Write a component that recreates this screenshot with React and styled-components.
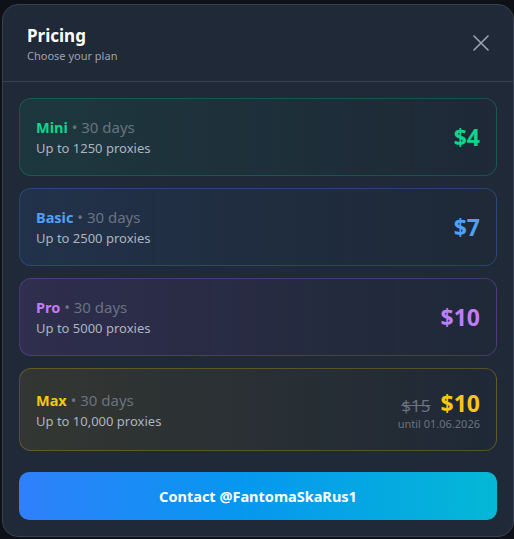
import React from 'react';
import styled, { createGlobalStyle } from 'styled-components';

const GlobalStyle = createGlobalStyle`
  html, body {
    margin: 0;
    padding: 0;
    background: #0e1118;
  }
  body {
    font-family: 'Segoe UI', 'Noto Sans', sans-serif;
  }
`;

const Modal = styled.div`
  box-sizing: border-box;
  margin: 4px 0 0 2px;
  width: 512px;
  height: 533px;
  background: #1f2937;
  border: 1px solid #374151;
  border-radius: 16px;
  display: flex;
  flex-direction: column;
  overflow: hidden;
`;

const Header = styled.div`
  display: flex;
  align-items: center;
  justify-content: space-between;
  height: 77px;
  box-sizing: border-box;
  padding: 0 24px;
  border-bottom: 1px solid #374151;
`;

const TitleBlock = styled.div`
  display: flex;
  flex-direction: column;
  gap: 2px;
  padding-top: 2px;
`;

const Title = styled.h2`
  margin: 0;
  font-size: 17px;
  font-weight: 700;
  color: #ffffff;
  line-height: 22px;
`;

const Subtitle = styled.p`
  margin: 0;
  font-size: 11px;
  color: #9ca3af;
  line-height: 14px;
`;

const CloseButton = styled.button`
  background: none;
  border: none;
  padding: 0;
  width: 18px;
  height: 18px;
  margin-right: -1px;
  color: #9ca3af;
  display: flex;
  align-items: center;
  justify-content: center;
  cursor: pointer;
`;

const Body = styled.div`
  display: flex;
  flex-direction: column;
  gap: 12px;
  padding: 16px 16px 0;
`;

const Card = styled.div`
  box-sizing: border-box;
  height: ${p => (p.$tall ? 83 : 78)}px;
  border-radius: 12px;
  border: 1px solid ${p => p.$border};
  background: linear-gradient(90deg, ${p => p.$tint} 0%, rgba(255, 255, 255, 0) 100%);
  display: flex;
  align-items: center;
  justify-content: space-between;
  padding: 0 16px 0 16px;
`;

const Info = styled.div`
  display: flex;
  flex-direction: column;
  gap: 2px;
`;

const NameLine = styled.div`
  font-size: 15px;
  line-height: 20px;
  color: #6b7280;
`;

const Name = styled.span`
  font-weight: 700;
  font-size: 14.5px;
  color: ${p => p.$color};
`;

const Desc = styled.div`
  font-size: 13px;
  line-height: 18px;
  color: #aeb4be;
`;

const PriceBlock = styled.div`
  display: flex;
  flex-direction: column;
  align-items: flex-end;
  gap: 0;
`;

const PriceRow = styled.div`
  display: flex;
  align-items: baseline;
  gap: 10px;
`;

const Price = styled.span`
  font-size: 23px;
  font-weight: 700;
  color: ${p => p.$color};
  line-height: 28px;
`;

const OldPrice = styled.span`
  font-size: 17px;
  color: #6b7280;
  text-decoration: line-through;
`;

const Until = styled.span`
  font-size: 11px;
  color: #6b7280;
  line-height: 14px;
`;

const ContactButton = styled.button`
  margin: 21px 16px 0;
  height: 48px;
  border: none;
  border-radius: 10px;
  background: linear-gradient(90deg, #2f80fb 0%, #0796f0 45%, #04b8d6 100%);
  color: #ffffff;
  font-family: inherit;
  font-size: 14.5px;
  font-weight: 700;
  cursor: pointer;
`;

const plans = [
  { name: 'Mini', desc: 'Up to 1250 proxies', price: '$4', color: '#10d48e', tint: 'rgba(16, 185, 129, 0.10)', border: 'rgba(16, 185, 129, 0.28)' },
  { name: 'Basic', desc: 'Up to 2500 proxies', price: '$7', color: '#4fa0f8', tint: 'rgba(59, 130, 246, 0.10)', border: 'rgba(59, 130, 246, 0.30)' },
  { name: 'Pro', desc: 'Up to 5000 proxies', price: '$10', color: '#c17cf7', tint: 'rgba(168, 85, 247, 0.12)', border: 'rgba(168, 85, 247, 0.30)' },
  { name: 'Max', desc: 'Up to 10,000 proxies', price: '$10', old: '$15', until: 'until 01.06.2026', color: '#fac515', tint: 'rgba(234, 179, 8, 0.10)', border: 'rgba(234, 179, 8, 0.28)' },
];

function App() {
  return (
    <>
      <GlobalStyle />
      <Modal>
        <Header>
          <TitleBlock>
            <Title>Pricing</Title>
            <Subtitle>Choose your plan</Subtitle>
          </TitleBlock>
          <CloseButton aria-label="Close">
            <svg width="16" height="16" viewBox="0 0 16 16" fill="none" stroke="currentColor" strokeWidth="1.6" strokeLinecap="round">
              <path d="M1 1 L15 15 M15 1 L1 15" />
            </svg>
          </CloseButton>
        </Header>
        <Body>
          {plans.map(plan => (
            <Card key={plan.name} $tint={plan.tint} $border={plan.border} $tall={!!plan.until}>
              <Info>
                <NameLine>
                  <Name $color={plan.color}>{plan.name}</Name> • 30 days
                </NameLine>
                <Desc>{plan.desc}</Desc>
              </Info>
              <PriceBlock>
                <PriceRow>
                  {plan.old && <OldPrice>{plan.old}</OldPrice>}
                  <Price $color={plan.color}>{plan.price}</Price>
                </PriceRow>
                {plan.until && <Until>{plan.until}</Until>}
              </PriceBlock>
            </Card>
          ))}
        </Body>
        <ContactButton>Contact @FantomaSkaRus1</ContactButton>
      </Modal>
    </>
  );
}

export default App;
